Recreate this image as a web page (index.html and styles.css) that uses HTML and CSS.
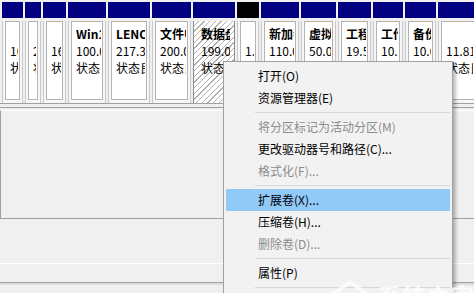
FILE: index.html
```html
<!DOCTYPE html>
<html lang="zh-CN">
<head>
    <meta charset="UTF-8">
    <title>磁盘管理</title>
    <link rel="stylesheet" href="styles.css">
</head>
<body>
    <div class="disk-row">
        <div class="part w21"><div class="part-head"></div><div class="part-body"><div class="box"><p class="name"></p><p>100 MB</p><p>状态良好</p></div></div></div>
        <div class="part w16"><div class="part-head"></div><div class="part-body"><div class="box"><p class="name"></p><p>200 MB</p><p>状态良好</p></div></div></div>
        <div class="part w23"><div class="part-head"></div><div class="part-body"><div class="box"><p class="name"></p><p>16 MB</p><p>状态良好</p></div></div></div>
        <div class="part w38"><div class="part-head"></div><div class="part-body"><div class="box"><p class="name">Win10 (C:)</p><p>100.00 GB NTFS</p><p>状态良好 (启动)</p></div></div></div>
        <div class="part w42"><div class="part-head"></div><div class="part-body"><div class="box"><p class="name">LENOVO (D:)</p><p>217.39 GB NTFS</p><p>状态良好</p></div></div></div>
        <div class="part w39"><div class="part-head"></div><div class="part-body"><div class="box"><p class="name">文件中心 (E:)</p><p>200.00 GB NTFS</p><p>状态良好</p></div></div></div>
        <div class="part w42 selected"><div class="part-head"></div><div class="part-body"><div class="box"><p class="name">数据盘 (F:)</p><p>199.00 GB NTFS</p><p>状态良好</p></div></div></div>
        <div class="part w22 free"><div class="part-head"></div><div class="part-body"><div class="box"><p class="name"></p><p>1.00 GB</p><p>未分配</p></div></div></div>
        <div class="part w38"><div class="part-head"></div><div class="part-body"><div class="box"><p class="name">新加卷 (G:)</p><p>110.00 GB NTFS</p><p>状态良好</p></div></div></div>
        <div class="part w35"><div class="part-head"></div><div class="part-body"><div class="box"><p class="name">虚拟机 (H:)</p><p>50.00 GB NTFS</p><p>状态良好</p></div></div></div>
        <div class="part w33"><div class="part-head"></div><div class="part-body"><div class="box"><p class="name">工程 (I:)</p><p>19.53 GB NTFS</p><p>状态良好</p></div></div></div>
        <div class="part w30"><div class="part-head"></div><div class="part-body"><div class="box"><p class="name">工作 (J:)</p><p>10.00 GB NTFS</p><p>状态良好</p></div></div></div>
        <div class="part w31"><div class="part-head"></div><div class="part-body"><div class="box"><p class="name">备份 (K:)</p><p>10.00 GB NTFS</p><p>状态良好</p></div></div></div>
        <div class="part w40"><div class="part-head"></div><div class="part-body"><div class="box"><p class="name"></p><p>11.81 GB</p><p>状态良好</p></div></div></div>
    </div>

    <div class="pane-top">
        <div class="pane-list"></div>
    </div>
    <div class="pane-bottom"></div>
    <div class="pane-strip"></div>

    <ul class="menu">
        <li>打开(O)</li>
        <li>资源管理器(E)</li>
        <li class="sep"></li>
        <li class="off">将分区标记为活动分区(M)</li>
        <li>更改驱动器号和路径(C)...</li>
        <li class="off">格式化(F)...</li>
        <li class="sep"></li>
        <li class="active">扩展卷(X)...</li>
        <li>压缩卷(H)...</li>
        <li class="off">删除卷(D)...</li>
        <li class="sep"></li>
        <li>属性(P)</li>
        <li class="sep"></li>
    </ul>

    <div class="watermark">
        <svg width="40" height="18" viewBox="0 0 40 18"><polyline points="2,17 20,4 38,17" fill="none" stroke="#fff" stroke-width="4"/></svg>
        <span>系统之家</span>
    </div>
</body>
</html>
```

FILE: styles.css
```css
body {
    margin: 0;
    width: 474px;
    height: 293px;
    overflow: hidden;
    position: relative;
    background-color: #f0f0f0;
    font-family: "Noto Sans CJK SC", sans-serif;
    font-size: 12px;
    color: #000;
}

.disk-row {
    display: flex;
    gap: 2px;
    padding: 2px 0 0 2px;
    height: 101px;
    border-bottom: 1px solid #a0a0a0;
    overflow: hidden;
}

.part {
    flex-shrink: 0;
    display: flex;
    flex-direction: column;
}

.w16 { width: 16px; }
.w21 { width: 21px; }
.w22 { width: 22px; }
.w23 { width: 23px; }
.w30 { width: 30px; }
.w31 { width: 31px; }
.w33 { width: 33px; }
.w35 { width: 35px; }
.w38 { width: 38px; }
.w39 { width: 39px; }
.w40 { width: 40px; }
.w42 { width: 42px; }

.part-head {
    height: 16px;
    background-color: #000080;
}

.free .part-head {
    background-color: #000;
}

.part-body {
    flex: 1;
    margin-top: 3px;
    padding: 0 2px 3px 2px;
    border: 1px solid #c8c8c8;
    border-top: none;
    border-bottom: none;
    background-color: #f7f7f7;
}

.box {
    height: 100%;
    box-sizing: border-box;
    padding: 3px 1px 0 4px;
    border: 1px solid #b4b4b4;
    background-color: #fff;
    white-space: nowrap;
}

.box p {
    margin: 0;
    height: 17px;
    line-height: 17px;
    overflow: hidden;
}

.box .name {
    font-weight: bold;
}

.selected .part-body {
    background: repeating-linear-gradient(135deg, #fff 0, #fff 3px, #b0b0b0 3px, #b0b0b0 4px);
    border-color: #8c8c8c;
}

.selected .box {
    background: transparent;
    border-color: transparent;
}

.pane-top {
    margin-top: 3px;
    border-top: 1px solid #a0a0a0;
    padding-top: 2px;
}

.pane-list {
    height: 107px;
    border-top: 1px solid #fff;
    border-left: 1px solid #a0a0a0;
    border-bottom: 1px solid #a0a0a0;
}

.pane-bottom {
    height: 44px;
    border-bottom: 1px solid #fff;
}

.pane-strip {
    height: 18px;
    border-bottom: 1px solid #a0a0a0;
    box-shadow: 0 2px 0 #dcdcdc;
}

.menu {
    position: absolute;
    left: 223px;
    top: 61px;
    bottom: 0;
    width: 224px;
    margin: 0;
    padding: 3px 2px 0 2px;
    overflow: hidden;
    list-style: none;
    background-color: #f2f2f2;
    border: 1px solid #a0a0a0;
    border-bottom: none;
    box-shadow: 3px 3px 3px rgba(0, 0, 0, 0.25);
}

.menu li {
    height: 22px;
    line-height: 22px;
    padding-left: 32px;
    white-space: nowrap;
}

.menu .off {
    color: #8c8c8c;
}

.menu .active {
    background-color: #91c9f7;
}

.menu .sep {
    height: 1px;
    margin: 3px 0 3px 29px;
    padding: 0;
    background-color: #d7d7d7;
}

.watermark {
    position: absolute;
    left: 330px;
    top: 278px;
    height: 15px;
    overflow: hidden;
    display: flex;
    align-items: flex-start;
    gap: 8px;
    opacity: 0.8;
}

.watermark span {
    margin-top: 4px;
    color: #fff;
    font-size: 24px;
    font-weight: bold;
    line-height: 28px;
}
```
